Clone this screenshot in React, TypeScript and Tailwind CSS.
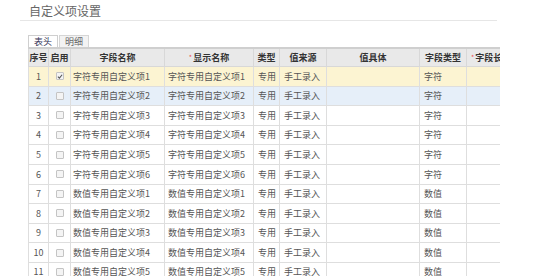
import React from "react";

const rows = [
  ...[1, 2, 3, 4, 5, 6].map((n) => ({ name: `字符专用自定义项${n}`, type: "字符" })),
  ...[1, 2, 3, 4, 5].map((n) => ({ name: `数值专用自定义项${n}`, type: "数值" })),
];

const cols = "grid grid-cols-[21px_22px_94px_89px_26px_47px_93px_47px_33px]";

function Check({ checked }: { checked: boolean }) {
  return (
    <span className="flex h-[8px] w-[8px] items-center justify-center rounded-[1px] border border-[#c4c4c4] bg-[#f4f4f4]">
      {checked && (
        <svg width="7" height="7" viewBox="0 0 8 8">
          <path d="M1.2 4.2 L3.2 6.2 L6.8 1.6" fill="none" stroke="#555" strokeWidth="1.4" />
        </svg>
      )}
    </span>
  );
}

export default function App() {
  const font = { fontFamily: '"Noto Sans CJK SC", "Noto Sans", sans-serif' };
  return (
    <div className="h-[276px] w-[554px] overflow-hidden bg-white" style={font}>
      <div className="pl-[29px] pt-[3px] text-[12px] leading-[15px] text-[#666]">自定义项设置</div>
      <div className="ml-[20px] mt-[2px] h-px w-[477px] bg-[#e6e6e6]" />
      <div className="ml-[28px] mt-[13px] flex h-[13px] items-end text-[9px] leading-[11px]">
        <div className="border border-b-0 border-[#cfcfcf] bg-white px-[5px] text-[#335]">表头</div>
        <div className="ml-[1px] border border-b-0 border-[#d6d6d6] bg-[#f3f3f3] px-[5px] text-[#666]">明细</div>
      </div>
      <div className="ml-[28px] w-[472px]">
        <div className={`${cols} h-[20px] border-t-2 border-[#cfcfcf] bg-[#e9e9e9] text-[9px] font-bold text-[#333]`}>
          {[
            ["序号", false],
            ["启用", false],
            ["字段名称", false],
            ["显示名称", true],
            ["类型", false],
            ["值来源", false],
            ["值具体", false],
            ["字段类型", false],
            ["字段长度", true],
          ].map(([t, req], i) => (
            <div
              key={i}
              className={`flex items-center overflow-hidden whitespace-nowrap border-r border-b border-[#d8d8d8] ${i === 8 ? "justify-start pl-[4px] border-r-0" : "justify-center"} ${i === 0 ? "border-l" : ""}`}
            >
              {req && <span className="mr-[1px] text-[7px] font-normal text-[#e55]">*</span>}
              {t as string}
            </div>
          ))}
        </div>
        {rows.map((r, idx) => {
          const bg = idx === 0 ? "bg-[#fcf4d2]" : idx === 1 ? "bg-[#e6eff9]" : "bg-white";
          const cell = "flex items-center overflow-hidden whitespace-nowrap border-r border-b border-[#dedede]";
          return (
            <div key={idx} className={`${cols} h-[19.6px] text-[9px] text-[#555] ${bg}`}>
              <div className={`${cell} border-l justify-center`}>{idx + 1}</div>
              <div className={`${cell} justify-center`}>
                <Check checked={idx === 0} />
              </div>
              <div className={`${cell} pl-[2px]`}>{r.name}</div>
              <div className={`${cell} pl-[3px]`}>{r.name}</div>
              <div className={`${cell} pl-[4px]`}>专用</div>
              <div className={`${cell} pl-[4px]`}>手工录入</div>
              <div className={cell}></div>
              <div className={`${cell} pl-[4px]`}>{r.type}</div>
              <div className={`${cell} border-r-0`}></div>
            </div>
          );
        })}
      </div>
    </div>
  );
}
